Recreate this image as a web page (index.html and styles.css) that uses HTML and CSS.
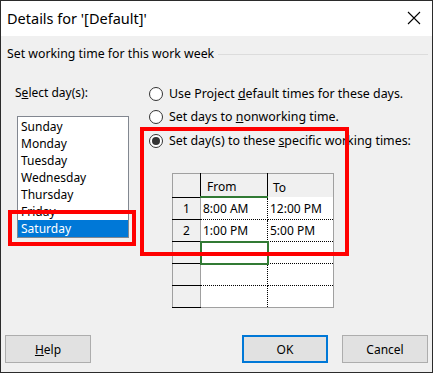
FILE: index.html
```html
<!DOCTYPE html>
<html lang="en">
<head>
  <meta charset="UTF-8">
  <title>Details for '[Default]'</title>
  <link rel="stylesheet" href="styles.css">
</head>
<body>

  <div class="window">

    <!-- Titelleiste -->
    <div class="titlebar">
      <span class="title">Details for '[Default]'</span>
      <svg class="close" width="14" height="14" viewBox="0 0 14 14">
        <path d="M1 1 L13 13 M13 1 L1 13" stroke="#000" stroke-width="1.1" fill="none"/>
      </svg>
    </div>

    <div class="content">
      <div class="group-head">
        <span>Set working time for this work week</span>
        <div class="group-line"></div>
      </div>

      <div class="main-row">
        <!-- Tage -->
        <div class="days">
          <div class="label">S<u>e</u>lect day(s):</div>
          <div class="listbox">
            <div class="item">Sunday</div>
            <div class="item">Monday</div>
            <div class="item">Tuesday</div>
            <div class="item">Wednesday</div>
            <div class="item">Thursday</div>
            <div class="item">Friday</div>
            <div class="item selected">Saturday</div>
          </div>
        </div>

        <!-- Optionen -->
        <div class="options">
          <div class="radio-row"><span class="radio"></span><span>Use Project <u>d</u>efault times for these days.</span></div>
          <div class="radio-row"><span class="radio"></span><span>Set days to <u>n</u>onworking time.</span></div>
          <div class="radio-row"><span class="radio checked"></span><span>Set day(s) to these <u>s</u>pecific working times:</span></div>

          <table class="times">
            <tr class="head">
              <td class="corner"></td>
              <td class="col-from">From</td>
              <td class="col-to">To</td>
            </tr>
            <tr>
              <td class="rownum">1</td>
              <td class="cell from">8:00 AM</td>
              <td class="cell">12:00 PM</td>
            </tr>
            <tr>
              <td class="rownum">2</td>
              <td class="cell from">1:00 PM</td>
              <td class="cell">5:00 PM</td>
            </tr>
            <tr>
              <td class="rownum"></td>
              <td class="cell from active"></td>
              <td class="cell"></td>
            </tr>
            <tr>
              <td class="rownum"></td>
              <td class="cell from"></td>
              <td class="cell"></td>
            </tr>
            <tr class="last">
              <td class="rownum"></td>
              <td class="cell from"></td>
              <td class="cell"></td>
            </tr>
          </table>
        </div>
      </div>

      <!-- Schaltflächen -->
      <div class="buttons">
        <button class="btn"><u>H</u>elp</button>
        <div class="btn-group">
          <button class="btn default">OK</button>
          <button class="btn">Cancel</button>
        </div>
      </div>
    </div>

    <!-- Markierungen -->
    <div class="mark mark-day"></div>
    <div class="mark mark-times"></div>
  </div>

</body>
</html>
```

FILE: styles.css
```css
/* Grundlayout */
body {
  margin: 0;
  padding: 0;
  font-family: "Noto Sans", "Open Sans", sans-serif;
  font-size: 12px;
  color: #000;
  background: #fff;
}

.window {
  position: relative;
  width: 433px;
  height: 373px;
  box-sizing: border-box;
  border: 1px solid #2b2b2b;
  background: #f0f0f0;
  display: flex;
  flex-direction: column;
}

/* Titelleiste */
.titlebar {
  height: 35px;
  background: #fff;
  display: flex;
  align-items: center;
  justify-content: space-between;
  padding: 0 11px 0 6px;
  flex-shrink: 0;
}

.title {
  font-size: 14.5px;
  margin-top: -1px;
}

.close {
  display: block;
  margin-top: -1px;
}

/* Inhalt */
.content {
  flex: 1;
  display: flex;
  flex-direction: column;
  padding-top: 9px;
}

.group-head {
  display: flex;
  align-items: center;
  height: 17px;
  padding: 0 4px 0 6px;
  font-size: 12.3px;
}

.group-line {
  flex: 1;
  border-top: 1px solid #dcdcdc;
  margin-left: 4px;
  margin-top: 1px;
}

.main-row {
  display: flex;
  margin-top: 22px;
}

/* Tagesauswahl */
.days {
  width: 134px;
  padding-left: 14px;
}

.label {
  height: 17px;
  line-height: 17px;
}

.listbox {
  margin: 15px 0 0 2px;
  width: 112px;
  height: 122px;
  box-sizing: border-box;
  border: 1px solid #828790;
  background: #fff;
  padding-top: 1px;
}

.item {
  height: 17px;
  line-height: 17px;
  padding-left: 3px;
  white-space: nowrap;
  overflow: hidden;
}

.item.selected {
  background: #0078d7;
  color: #fff;
}

/* Optionen */
.options {
  flex: 1;
}

.radio-row {
  height: 23px;
  display: flex;
  align-items: center;
  white-space: nowrap;
  font-size: 12.4px;
}

.radio-row:first-child {
  margin-top: -2px;
}

.radio-row:nth-child(3) {
  margin-top: 1px;
}

.radio {
  width: 14px;
  height: 14px;
  box-sizing: border-box;
  border: 1px solid #333;
  border-radius: 50%;
  background: #fff;
  margin-right: 6px;
  position: relative;
  flex-shrink: 0;
}

.radio.checked::after {
  content: "";
  position: absolute;
  left: 2px;
  top: 2px;
  width: 8px;
  height: 8px;
  border-radius: 50%;
  background: #333;
}

/* Tabelle */
.times {
  border-collapse: collapse;
  margin: 21px 0 0 23px;
  background: #fff;
  border: 1px solid #a0a0a0;
}

.times td {
  padding: 0;
  height: 21px;
  line-height: 21px;
  white-space: nowrap;
}

.times .head td {
  height: 22px;
  background: #f0f0f0;
  vertical-align: bottom;
  line-height: 18px;
}

.corner {
  width: 27px;
  border-right: 1px solid #000;
  border-bottom: 1px solid #000;
}

.col-from {
  width: 60px;
  padding-left: 6px !important;
  border-right: 1px solid #000;
  border-bottom: 2px solid #317a34;
}

.col-to {
  width: 60px;
  padding-left: 5px !important;
}

.rownum {
  background: #f0f0f0;
  text-align: center;
  border-right: 1px solid #a0a0a0;
  border-bottom: 1px solid #000;
}

.cell {
  padding-left: 2px !important;
  border-bottom: 1px dotted #000;
}

.cell.from {
  border-right: 1px dotted #000;
}

.cell.active {
  outline: 2px solid #317a34;
  outline-offset: -1px;
}

.last .cell {
  border-bottom: none;
}

/* Schaltflächen */
.buttons {
  margin-top: auto;
  margin-bottom: 9px;
  display: flex;
  justify-content: space-between;
  padding: 0 4px;
}

.btn-group {
  display: flex;
  gap: 14px;
}

.btn {
  width: 86px;
  height: 28px;
  box-sizing: border-box;
  border: 1px solid #adadad;
  background: #e1e1e1;
  font-family: inherit;
  font-size: 12px;
  color: #000;
  padding: 0;
}

.btn.default {
  border: 2px solid #0078d7;
}

/* rote Markierungen */
.mark {
  position: absolute;
  border: 4px solid #ff0000;
  box-sizing: border-box;
}

.mark-day {
  left: 7px;
  top: 209px;
  width: 128px;
  height: 36px;
}

.mark-times {
  left: 139px;
  top: 126px;
  width: 209px;
  height: 129px;
}
```
